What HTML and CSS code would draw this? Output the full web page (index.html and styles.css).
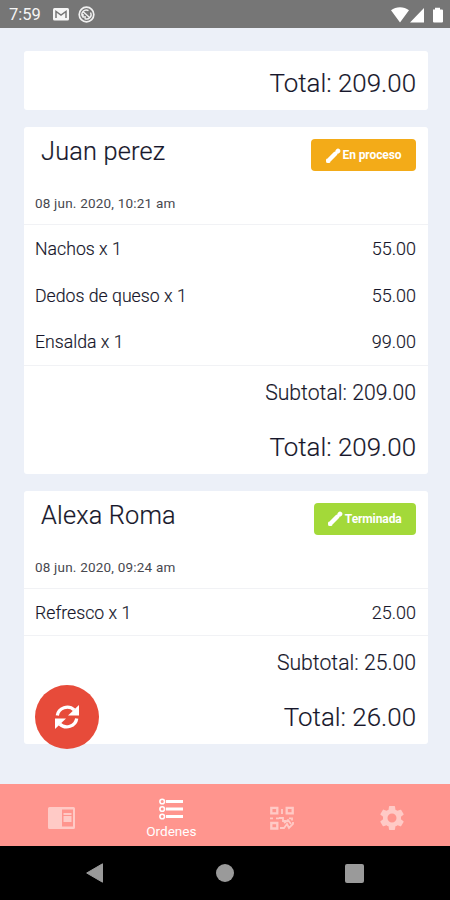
FILE: index.html
```
<!DOCTYPE html>
<html lang="es">
<head>
<meta charset="utf-8">
<title>Ordenes</title>
<link rel="stylesheet" href="styles.css">
</head>
<body>
<div class="phone">
  <header class="status">
    <span class="clock">7:59</span>
    <svg class="mail" width="16" height="13" viewBox="0 0 16 13"><rect width="16" height="12.5" rx="1.5" fill="#f5f5f5"/><path d="M3 10V3.5L8 7l5-3.500V10" fill="none" stroke="#777" stroke-width="1.500"/></svg>
    <svg class="sync" width="17" height="17" viewBox="0 0 17 17" fill="none" stroke="#f1f1f1"><circle cx="8.500" cy="8.500" r="7.300" stroke-width="1.700"/><path d="M4.500 10.500A4.300 4.300 0 0 1 10.500 4.700M12.500 6.500A4.300 4.300 0 0 1 6.500 12.300M5.500 6l6 5.500M5 8v3h3" stroke-width="1.400"/></svg>
    <svg class="signals" width="52" height="16" viewBox="0 0 52 16" fill="#fff"><path d="M0 3.300C5 -.8 13 -.8 18 3.300L9 15.500ZM33 1v14.500H19ZM42 2.500h2V.7h5v1.800h2q1 0 1 1v11q0 1-1 1h-8q-1 0-1-1v-11Z"/></svg>
  </header>
  <main class="content">
    <section class="card card-short"><p class="total">Total: 209.00</p></section>
    <section class="card">
      <div class="head">
        <div class="top"><h2>Juan perez</h2>
          <button class="badge process"><svg width="15" height="15" viewBox="0 0 15 15"><path d="M2.300 12.700 9.200 5.800" stroke="#fff" stroke-width="4.400" stroke-linecap="round"/><path d="M.3 14.700V10.500L4.500 14.700Z" fill="#fff"/><path d="M11.700 3.300l.3-.3" stroke="#fff" stroke-width="4.600" stroke-linecap="round"/></svg><span>En proceso</span></button></div>
        <p class="date">08 jun. 2020, 10:21 am</p>
      </div>
      <div class="items">
        <div class="row"><span>Nachos x 1</span><span class="price">55.00</span></div>
        <div class="row"><span>Dedos de queso x 1</span><span class="price">55.00</span></div>
        <div class="row"><span>Ensalda x 1</span><span class="price">99.00</span></div>
      </div>
      <p class="subtotal">Subtotal: 209.00</p>
      <p class="total">Total: 209.00</p>
    </section>
    <section class="card">
      <div class="head">
        <div class="top"><h2>Alexa Roma</h2>
          <button class="badge done"><svg width="15" height="15" viewBox="0 0 15 15"><path d="M2.300 12.700 9.200 5.800" stroke="#fff" stroke-width="4.400" stroke-linecap="round"/><path d="M.3 14.700V10.500L4.500 14.700Z" fill="#fff"/><path d="M11.700 3.300l.3-.3" stroke="#fff" stroke-width="4.600" stroke-linecap="round"/></svg><span>Terminada</span></button></div>
        <p class="date">08 jun. 2020, 09:24 am</p>
      </div>
      <div class="items"><div class="row"><span>Refresco x 1</span><span class="price">25.00</span></div></div>
      <p class="subtotal">Subtotal: 25.00</p>
      <p class="total">Total: 26.00</p>
    </section>
    <button class="fab" aria-label="Actualizar"><svg width="26" height="26" viewBox="0 0 26 26"><path d="M3.300 11.500A10 9.500 0 0 1 20.300 6" fill="none" stroke="#fff" stroke-width="3.300"/><path d="M25 1v10.500H14Z" fill="#fff"/><path d="M22.700 14.500A10 9.500 0 0 1 5.700 20" fill="none" stroke="#fff" stroke-width="3.300"/><path d="M1 25V14.500H12Z" fill="#fff"/></svg></button>
  </main>
  <nav class="tabs">
    <a class="tab"><svg width="27" height="22" viewBox="0 0 27 22" fill="#ffcac6"><path fill-rule="evenodd" d="M1.500 0h24q1.500 0 1.500 1.500v19q0 1.500-1.500 1.500h-24Q0 22 0 20.500v-19Q0 0 1.500 0ZM14 2.500v17h11v-17Z"/><path d="M15.500 6h8v2h-8zM15.500 9h8v6h-8z"/></svg></a>
    <a class="tab active"><svg width="24" height="22" viewBox="0 0 24 22" fill="none" stroke="#fff"><path d="M7 3.500H24M7 11H24M7 18.500H24" stroke-width="2.800"/><circle cx="3.200" cy="3.500" r="2.300" stroke-width="1.600"/><circle cx="3.200" cy="11" r="2.300" stroke-width="1.600"/><circle cx="3.200" cy="18.500" r="2.300" stroke-width="1.600"/></svg><span>Ordenes</span></a>
    <a class="tab"><svg width="24" height="24" viewBox="0 0 24 24" fill="none" stroke="#ffcac6"><path d="M1.300 1.800h6v5.500h-6zM16.700 1.800h6v5.500h-6zM1.300 17h6v5.500h-6z" stroke-width="2.300"/><path d="M12 3v5M0 12.300h3M6 12.300h3M9 12h4v3h3M19 12.300h2M22 11.500v3M14 17l4-3 3 4M10 22h4l3-4 2 4 4-4v-2" stroke-width="1.800"/></svg></a>
    <a class="tab"><svg width="30" height="30" viewBox="0 0 24 24"><path fill="#ffcac6" d="M19.140 12.940c.04-.3.060-.61.060-.94 0-.32-.02-.64-.07-.94l2.030-1.580c.18-.14.230-.41.120-.61l-1.920-3.320c-.12-.22-.37-.29-.59-.22l-2.390.96c-.5-.38-1.030-.7-1.620-.94l-.36-2.540c-.04-.24-.24-.41-.48-.41h-3.840c-.24 0-.43.170-.47.410l-.36 2.540c-.59.240-1.130.570-1.620.940l-2.390-.96c-.22-.08-.47 0-.59.220L2.740 8.870c-.12.210-.08.470.12.610l2.030 1.580c-.05.300-.09.630-.09.940s.02.640.07.940l-2.030 1.580c-.18.140-.23.410-.12.610l1.920 3.320c.12.220.370.290.590.220l2.390-.96c.5.380 1.030.7 1.620.940l.36 2.540c.05.240.240.410.480.410h3.840c.24 0 .44-.17.470-.41l.36-2.540c.59-.24 1.130-.56 1.620-.94l2.390.96c.22.080.470 0 .59-.22l1.920-3.320c.12-.22.070-.47-.12-.61l-2.010-1.580ZM12 15.600a3.600 3.600 0 1 1 0-7.200 3.600 3.600 0 0 1 0 7.200Z"/></svg></a>
  </nav>
  <footer class="system">
    <svg width="18" height="20" viewBox="0 0 18 20"><path d="M.7 10 16.500.8v18.400Z" fill="#9a9a9a" stroke="#9a9a9a" stroke-linejoin="round"/></svg>
    <i class="home"></i>
    <i class="recent"></i>
  </footer>
</div>
</body>
</html>
```
FILE: styles.css
```
* { box-sizing: border-box; }
body { margin: 0; font-family: Roboto, "Liberation Sans", sans-serif; color: #17172b; }
h2, p { margin: 0; }
button { border: 0; padding: 0; font-family: inherit; }
svg { display: block; flex: none; }
.phone { width: 450px; height: 900px; display: flex; flex-direction: column; overflow: hidden; background: #ecf0f8; }
.status { height: 28px; flex: none; display: flex; align-items: center; padding: 1px 7px 0 9px; background: #767676; }
.clock { width: 44px; font-size: 16.500px; color: #f5f5f5; }
.sync { margin-left: 9px; }
.signals { margin-left: auto; }
.content { position: relative; flex: 1; padding: 23px 22.500px 0 23.500px; }
.card { margin-bottom: 17px; background: #fff; border-radius: 3px; overflow: hidden; }
.card-short { height: 59.400px; padding-top: 5px; }
.head { height: 98px; padding: 12px 11.500px 0; border-bottom: 1px solid #f1f2f5; }
.top { display: flex; justify-content: space-between; height: 53px; padding-left: 6px; }
h2 { font-size: 25.300px; line-height: 25px; font-weight: 300; letter-spacing: .2px; -webkit-text-stroke: .2px #17172b; }
.badge { display: flex; align-items: center; justify-content: center; gap: 2px; height: 32px; border-radius: 4px; color: #fff; font-size: 12px; font-weight: 700; letter-spacing: -.1px; }
.process { width: 105px; background: #f3ab18; }
.done { width: 102.500px; background: #a3d939; }
.date { font-size: 13.500px; line-height: 22px; color: #48484f; letter-spacing: .2px; }
.items { border-bottom: 1px solid #f1f2f5; }
.row { display: flex; justify-content: space-between; height: 46.500px; padding: 1px 11.500px 0; line-height: 46.500px; font-size: 17.700px; font-weight: 300; -webkit-text-stroke: .15px #17172b; }
.price { font-size: 18px; }
.subtotal, .total { height: 54px; line-height: 54px; padding-right: 11.500px; text-align: right; font-weight: 300; -webkit-text-stroke: .15px #17172b; }
.subtotal { font-size: 21.200px; }
.total { font-size: 25.900px; }
.fab { position: absolute; left: 35px; top: 657px; width: 64px; height: 64px; display: grid; place-items: center; border-radius: 50%; background: #e74b3a; }
.tabs { height: 62px; flex: none; display: grid; grid-template-columns: repeat(4, 1fr); padding: 0 3px 0 6px; background: #ff958e; }
.tab { display: flex; flex-direction: column; align-items: center; justify-content: center; padding-top: 5px; }
.active { padding-top: 7px; color: #fff; font-size: 13.600px; line-height: 16px; gap: 3px; }
.system { height: 54px; flex: none; display: flex; align-items: center; justify-content: space-between; padding: 0 86px; background: #000; }
.home { width: 18px; height: 18px; border-radius: 50%; background: #9a9a9a; }
.recent { width: 19px; height: 19px; border-radius: 2px; background: #9a9a9a; }
```
